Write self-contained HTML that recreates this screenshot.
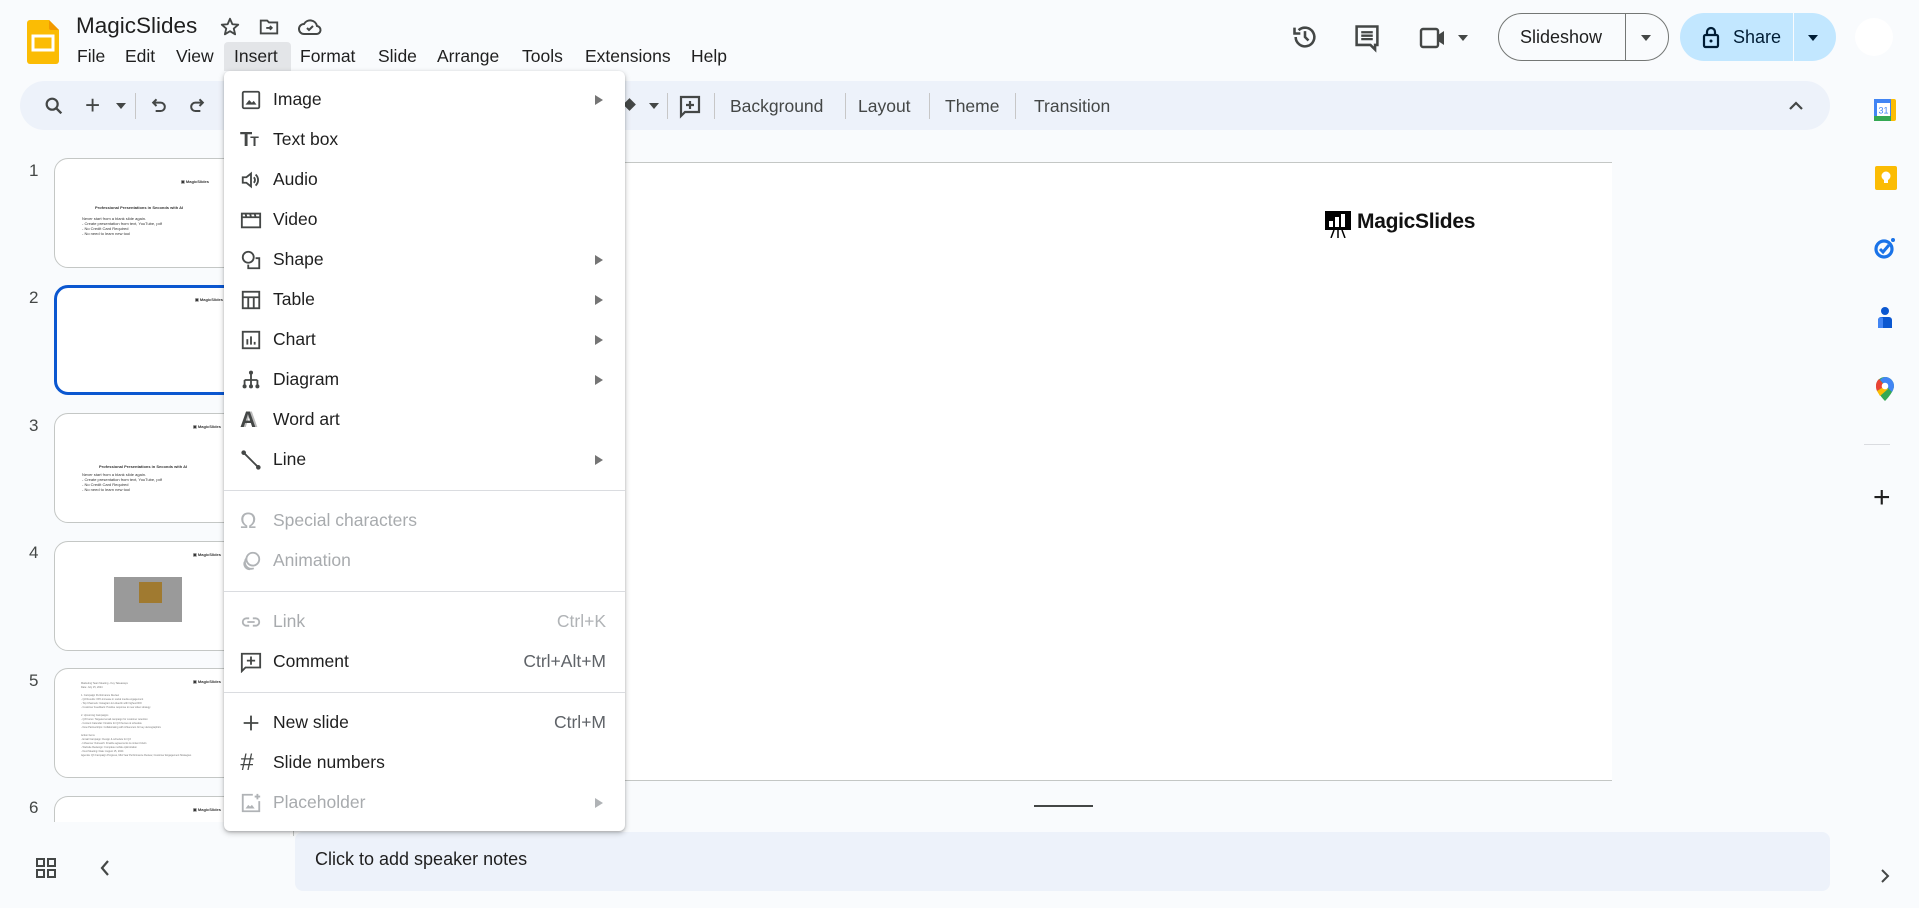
<!DOCTYPE html>
<html><head><meta charset="utf-8"><style>
*{box-sizing:border-box;margin:0;padding:0}
body{width:1919px;height:908px;background:#f9fbfd;font-family:"Liberation Sans",Arial,sans-serif;position:relative;overflow:hidden;color:#1f1f1f}
.a{position:absolute}
.menu span{position:absolute;font-size:17.5px;top:46px}
.tb{position:absolute;top:81px;left:20px;width:1810px;height:49px;background:#edf2fa;border-radius:25px}
.tbt{position:absolute;top:96px;font-size:17.5px;color:#444746}
.sep{position:absolute;top:93px;width:1px;height:26px;background:#c7c7c7}
.thumb{position:absolute;left:54px;width:240px;height:110px;background:#fff;border:1px solid #c4c7c5;border-radius:14px;overflow:hidden}
.num{position:absolute;left:29px;font-size:17px;color:#444746}
.dd{position:absolute;left:224px;top:71px;width:401px;height:760px;background:#fff;border-radius:6px;box-shadow:0 2px 6px rgba(0,0,0,.25),0 1px 2px rgba(0,0,0,.15)}
.it{position:absolute;left:49px;font-size:17.5px;color:#1f1f1f}
.it.g{color:#a8abae}
.ic{position:absolute;left:16px;width:22px;height:22px}
.arr{position:absolute;left:371px;width:0;height:0;border-left:8px solid #757575;border-top:5px solid transparent;border-bottom:5px solid transparent}
.sc{position:absolute;right:19px;font-size:17.5px;color:#5f6368}
.hr{position:absolute;left:0;width:401px;height:1px;background:#dadce0}
.tiny{font-size:4px;line-height:5px;color:#333;position:absolute}
</style></head><body>

<!-- logo -->
<svg class="a" style="left:27px;top:20px" width="32" height="44" viewBox="0 0 32 44"><path d="M3 0h19l10 10v31a3 3 0 0 1-3 3H3a3 3 0 0 1-3-3V3a3 3 0 0 1 3-3z" fill="#fbbc04"/><path d="M22 0l10 10h-8a2 2 0 0 1-2-2z" fill="#f29900"/><rect x="6" y="16" width="20" height="14" fill="none" stroke="#fff" stroke-width="3"/></svg>
<div class="a" style="left:76px;top:13px;font-size:22.5px">MagicSlides</div>
<svg class="a" style="left:219px;top:16px" width="22" height="22" viewBox="0 0 24 24"><path d="M12 3l2.6 6 6.4.5-4.9 4.2 1.5 6.3L12 16.6 6.4 20l1.5-6.3L3 9.5 9.4 9z" fill="none" stroke="#444746" stroke-width="2" stroke-linejoin="round"/></svg>
<svg class="a" style="left:258px;top:16px" width="22" height="22" viewBox="0 0 24 24"><path d="M3 5h7l2 2h9v12H3z" fill="none" stroke="#444746" stroke-width="2"/><path d="M9 13h6m-2-2l2 2-2 2" fill="none" stroke="#444746" stroke-width="2"/></svg>
<svg class="a" style="left:298px;top:16px" width="24" height="22" viewBox="0 0 24 22"><path d="M6 18a5 5 0 0 1 0-10 7 7 0 0 1 13 2 4 4 0 0 1-1 8z" fill="none" stroke="#444746" stroke-width="2"/><path d="M9 12l2 2 4-4" fill="none" stroke="#444746" stroke-width="2"/></svg>
<div class="a" style="left:224px;top:42px;width:67px;height:29px;background:#e3e5e8;border-radius:4px 4px 0 0"></div>
<div class="menu"><span style="left:77px">File</span><span style="left:125px">Edit</span><span style="left:176px">View</span><span style="left:234px">Insert</span><span style="left:300px">Format</span><span style="left:378px">Slide</span><span style="left:437px">Arrange</span><span style="left:522px">Tools</span><span style="left:585px">Extensions</span><span style="left:691px">Help</span></div>

<!-- top right -->
<svg class="a" style="left:1291px;top:23px" width="28" height="28" viewBox="0 0 24 24"><path d="M4 12a8 8 0 1 0 2.5-5.8" fill="none" stroke="#444746" stroke-width="2.2"/><path d="M3 4v5h5" fill="none" stroke="#444746" stroke-width="2.2"/><path d="M12 7v5l3 3" fill="none" stroke="#444746" stroke-width="2.2"/></svg>
<svg class="a" style="left:1353px;top:23px" width="28" height="30" viewBox="0 0 24 26"><path d="M3 3h18v16h-2v4l-4-4H3z" fill="none" stroke="#444746" stroke-width="2.2"/><path d="M7 8h10M7 11h10M7 14h10" stroke="#444746" stroke-width="2"/></svg>
<svg class="a" style="left:1419px;top:26px" width="28" height="24" viewBox="0 0 28 24"><rect x="2" y="3" width="17" height="18" rx="2" fill="none" stroke="#444746" stroke-width="2.4"/><path d="M19 9l6-4v14l-6-4z" fill="#444746"/></svg>
<div class="a" style="left:1458px;top:35px;border-top:6px solid #444746;border-left:5px solid transparent;border-right:5px solid transparent"></div>
<div class="a" style="left:1498px;top:13px;width:171px;height:48px;border:1px solid #747775;border-radius:24px"></div>
<div class="a" style="left:1625px;top:13px;width:1px;height:48px;background:#747775"></div>
<div class="a" style="left:1520px;top:27px;font-size:18px;color:#1f1f1f">Slideshow</div>
<div class="a" style="left:1641px;top:35px;border-top:6px solid #444746;border-left:5px solid transparent;border-right:5px solid transparent"></div>
<div class="a" style="left:1680px;top:13px;width:156px;height:48px;background:#c2e7ff;border-radius:24px"></div>
<div class="a" style="left:1793px;top:13px;width:1px;height:48px;background:#f9fbfd"></div>
<svg class="a" style="left:1702px;top:25px" width="18" height="24" viewBox="0 0 18 24"><rect x="2" y="10" width="14" height="12" rx="1.5" fill="none" stroke="#001d35" stroke-width="2.2"/><path d="M5 10V7a4 4 0 0 1 8 0v3" fill="none" stroke="#001d35" stroke-width="2.2"/><circle cx="9" cy="16" r="1.5" fill="#001d35"/></svg>
<div class="a" style="left:1733px;top:27px;font-size:18px;color:#001d35">Share</div>
<div class="a" style="left:1808px;top:35px;border-top:6px solid #001d35;border-left:5px solid transparent;border-right:5px solid transparent"></div>
<div class="a" style="left:1855px;top:18px;width:38px;height:38px;border-radius:50%;background:#fff"></div>

<!-- toolbar -->
<div class="tb"></div>
<svg class="a" style="left:43px;top:95px" width="22" height="22" viewBox="0 0 24 24"><circle cx="10" cy="10" r="6" fill="none" stroke="#444746" stroke-width="2.4"/><path d="M14.5 14.5L20 20" stroke="#444746" stroke-width="2.6"/></svg>
<div class="a" style="left:85px;top:90px;font-size:26px;color:#444746">+</div>
<div class="a" style="left:116px;top:103px;border-top:6px solid #444746;border-left:5px solid transparent;border-right:5px solid transparent"></div>
<div class="sep" style="left:135px"></div>
<svg class="a" style="left:149px;top:96px" width="20" height="20" viewBox="0 0 24 24"><path d="M9 4L5 8l4 4M5 8h9a5 5 0 0 1 0 10H8" fill="none" stroke="#444746" stroke-width="2.4"/></svg>
<svg class="a" style="left:187px;top:96px" width="20" height="20" viewBox="0 0 24 24"><path d="M15 4l4 4-4 4M19 8h-9a5 5 0 0 0 0 10h6" fill="none" stroke="#444746" stroke-width="2.4"/></svg>
<div class="a" style="left:625px;top:100px;width:9px;height:9px;background:#444746;transform:rotate(45deg)"></div>
<div class="a" style="left:649px;top:103px;border-top:6px solid #444746;border-left:5px solid transparent;border-right:5px solid transparent"></div>
<div class="sep" style="left:667px"></div>
<svg class="a" style="left:678px;top:94px" width="24" height="26" viewBox="0 0 24 26"><path d="M3 3h18v15H7l-4 4z" fill="none" stroke="#444746" stroke-width="2.2"/><path d="M12 7v8M8 11h8" stroke="#444746" stroke-width="2.2"/></svg>
<div class="sep" style="left:714px"></div>
<div class="tbt" style="left:730px">Background</div>
<div class="sep" style="left:845px"></div>
<div class="tbt" style="left:858px">Layout</div>
<div class="sep" style="left:929px"></div>
<div class="tbt" style="left:945px">Theme</div>
<div class="sep" style="left:1015px"></div>
<div class="tbt" style="left:1034px">Transition</div>
<svg class="a" style="left:1787px;top:99px" width="18" height="14" viewBox="0 0 18 14"><path d="M3 10l6-6 6 6" fill="none" stroke="#444746" stroke-width="2.2"/></svg>

<!-- canvas -->
<div class="a" style="left:295px;top:162px;width:1317px;height:619px;background:#fff;border-top:1px solid #c4c7c5;border-bottom:1px solid #c4c7c5"></div>
<svg class="a" style="left:1324px;top:210px" width="28" height="28" viewBox="0 0 28 28"><rect x="1" y="1" width="26" height="19" fill="#000"/><rect x="5" y="11" width="4" height="6" fill="#fff"/><rect x="11" y="7" width="4" height="10" fill="#fff"/><rect x="17" y="4" width="4" height="13" fill="#fff"/><path d="M10 20l-3 8M14 20v8M18 20l3 8" stroke="#000" stroke-width="1.5"/></svg>
<div class="a" style="left:1357px;top:210px;font-size:21px;font-weight:bold;color:#111;letter-spacing:-0.3px">MagicSlides</div>
<div class="a" style="left:1034px;top:805px;width:59px;height:2px;background:#444746"></div>

<!-- notes -->
<div class="a" style="left:295px;top:832px;width:1535px;height:59px;background:#edf2fa;border-radius:8px"></div>
<div class="a" style="left:315px;top:849px;font-size:18px;color:#1f1f1f">Click to add speaker notes</div>

<!-- thumbnails -->
<div class="num" style="top:161px">1</div>
<div class="thumb" style="top:158px">
<div class="tiny" style="left:126px;top:20px;font-weight:bold">▣ MagicSlides</div>
<div class="tiny" style="left:40px;top:46px;font-weight:bold">Professional Presentations in Seconds with AI</div>
<div class="tiny" style="left:27px;top:57px">Never start from a blank slide again.<br>- Create presentation from text, YouTube, pdf<br>- No Credit Card Required<br>- No need to learn new tool</div>
</div>
<div class="num" style="top:288px">2</div>
<div class="thumb" style="top:285px;border:3px solid #0b57d0">
<div class="tiny" style="left:138px;top:9px;font-weight:bold">▣ MagicSlides</div>
</div>
<div class="num" style="top:416px">3</div>
<div class="thumb" style="top:413px">
<div class="tiny" style="left:138px;top:10px;font-weight:bold">▣ MagicSlides</div>
<div class="tiny" style="left:44px;top:50px;font-weight:bold">Professional Presentations in Seconds with AI</div>
<div class="tiny" style="left:27px;top:58px">Never start from a blank slide again.<br>- Create presentation from text, YouTube, pdf<br>- No Credit Card Required<br>- No need to learn new tool</div>
</div>
<div class="num" style="top:543px">4</div>
<div class="thumb" style="top:541px">
<div class="tiny" style="left:138px;top:10px;font-weight:bold">▣ MagicSlides</div>
<div class="a" style="left:59px;top:35px;width:68px;height:45px;background:#9a9a9a"></div>
<div class="a" style="left:84px;top:40px;width:23px;height:21px;background:#a07a30"></div>
</div>
<div class="num" style="top:671px">5</div>
<div class="thumb" style="top:668px">
<div class="tiny" style="left:138px;top:10px;font-weight:bold">▣ MagicSlides</div>
<div class="tiny" style="left:26px;top:13px;color:#777;font-size:2.5px;line-height:4px">Marketing Team Meeting - Key Takeaways<br>Date: July 15, 2024<br><br>1. Campaign Performance Review<br>- Q2 Results: 15% increase in social media engagement<br>- Top Channels: Instagram &amp; LinkedIn with highest ROI<br>- Customer Feedback: Positive response to new video strategy<br><br>2. Upcoming Campaigns<br>- Q3 Focus: Targeted email campaign for customer retention<br>- Content Calendar: Finalize for Q3 themes &amp; schedule<br>- New Partnerships: Collaborating with influencers for key demographics<br><br>Action Items<br>- Email Campaign: Design &amp; schedule for Q3<br>- Influencer Outreach: Finalize agreements &amp; content briefs<br>- Website Redesign: Complete mobile optimization<br>- Next Meeting: Date: August 15, 2024<br>Agenda: Q3 Campaign Progress, Mid-Year Performance Review, Customer Engagement Strategies</div>
</div>
<div class="num" style="top:798px">6</div>
<div class="thumb" style="top:796px;height:40px;border-bottom:none;border-radius:14px 14px 0 0">
<div class="tiny" style="left:138px;top:10px;font-weight:bold">▣ MagicSlides</div>
</div>
<div class="a" style="left:0;top:822px;width:290px;height:86px;background:#f9fbfd"></div>
<svg class="a" style="left:36px;top:858px" width="20" height="20" viewBox="0 0 20 20"><g fill="none" stroke="#444746" stroke-width="2"><rect x="1" y="1" width="7" height="7"/><rect x="12" y="1" width="7" height="7"/><rect x="1" y="12" width="7" height="7"/><rect x="12" y="12" width="7" height="7"/></g></svg>
<svg class="a" style="left:98px;top:858px" width="14" height="20" viewBox="0 0 14 20"><path d="M10 3l-6 7 6 7" fill="none" stroke="#444746" stroke-width="2.2"/></svg>

<!-- right sidebar -->
<svg class="a" style="left:1874px;top:97px" width="22" height="24" viewBox="0 0 22 24"><rect x="0" y="2" width="22" height="22" rx="2" fill="#fbbc04"/><rect x="0" y="2" width="17" height="18" fill="#4285f4"/><rect x="3" y="6" width="13" height="13" fill="#fff"/><rect x="0" y="19" width="17" height="5" fill="#34a853"/><text x="4.5" y="16.5" font-size="9" fill="#4285f4" font-family="Liberation Sans">31</text></svg>
<svg class="a" style="left:1875px;top:166px" width="22" height="24" viewBox="0 0 22 24"><rect x="0" y="0" width="22" height="24" rx="2" fill="#fbbc04"/><circle cx="11" cy="10" r="4.5" fill="#fff"/><rect x="9" y="14" width="4" height="3" fill="#fff"/></svg>
<svg class="a" style="left:1874px;top:237px" width="22" height="22" viewBox="0 0 22 22"><circle cx="10" cy="12" r="8" fill="none" stroke="#1a73e8" stroke-width="3.2"/><path d="M6 12l3 3 6-7" fill="none" stroke="#1a73e8" stroke-width="3"/><circle cx="19" cy="3" r="2" fill="#1a73e8"/></svg>
<svg class="a" style="left:1876px;top:306px" width="18" height="24" viewBox="0 0 18 24"><circle cx="9" cy="5" r="4" fill="#0b57d0"/><path d="M2 14a3 3 0 0 1 3-3h8a3 3 0 0 1 3 3v8H2z" fill="#0b57d0"/><path d="M2 14v8h5v-10a3 3 0 0 0-5 2z" fill="#4285f4"/></svg>
<svg class="a" style="left:1876px;top:377px" width="18" height="25" viewBox="0 0 18 25"><path d="M9 0a9 9 0 0 1 9 9c0 6-9 15-9 15S0 15 0 9a9 9 0 0 1 9-9z" fill="#34a853"/><path d="M9 0a9 9 0 0 1 9 9c0 2-1 4-2 6L4 3a9 9 0 0 1 5-3z" fill="#4285f4"/><path d="M0 9a9 9 0 0 1 3-7l6 7-8 5C0 12 0 10 0 9z" fill="#ea4335"/><path d="M1 14l8-5 3 3-8 7z" fill="#fbbc04"/><circle cx="9" cy="9" r="3.3" fill="#fff"/></svg>
<div class="a" style="left:1864px;top:444px;width:26px;height:1px;background:#dadce0"></div>
<div class="a" style="left:1873px;top:481px;font-size:30px;color:#1f1f1f;font-weight:300">+</div>
<svg class="a" style="left:1879px;top:868px" width="12" height="16" viewBox="0 0 12 16"><path d="M3 2l6 6-6 6" fill="none" stroke="#444746" stroke-width="2"/></svg>

<!-- dropdown -->
<div class="dd">
<!-- rows: top offsets relative to dd (71) -->
<svg class="ic" style="top:18px" viewBox="0 0 24 24"><rect x="3" y="3" width="18" height="18" rx="1.5" fill="none" stroke="#444746" stroke-width="2"/><path d="M6 17l4-5 3 3 2-2 3 4z" fill="#444746"/></svg>
<div class="it" style="top:18px">Image</div><div class="arr" style="top:24px"></div>
<div class="ic" style="top:58px;font-weight:bold;font-size:20px;color:#444746;line-height:22px;letter-spacing:-2px">T<span style="font-size:14px">T</span></div>
<div class="it" style="top:58px">Text box</div>
<svg class="ic" style="top:98px" viewBox="0 0 24 24"><path d="M3 9h4l5-4v14l-5-4H3z" fill="none" stroke="#444746" stroke-width="2"/><path d="M15 9a4 4 0 0 1 0 6M17 6a8 8 0 0 1 0 12" fill="none" stroke="#444746" stroke-width="2"/></svg>
<div class="it" style="top:98px">Audio</div>
<svg class="ic" style="top:138px" viewBox="0 0 24 24"><rect x="2" y="5" width="20" height="15" fill="none" stroke="#444746" stroke-width="2"/><path d="M2 9h20M6 5l1 4M11 5l1 4M16 5l1 4" stroke="#444746" stroke-width="2"/></svg>
<div class="it" style="top:138px">Video</div>
<svg class="ic" style="top:178px" viewBox="0 0 24 24"><circle cx="9" cy="9" r="6" fill="none" stroke="#444746" stroke-width="2"/><path d="M17 10h4v11H9v-4" fill="none" stroke="#444746" stroke-width="2"/></svg>
<div class="it" style="top:178px">Shape</div><div class="arr" style="top:184px"></div>
<svg class="ic" style="top:218px" viewBox="0 0 24 24"><rect x="3" y="3" width="18" height="18" fill="none" stroke="#444746" stroke-width="2"/><path d="M3 9h18M9 9v12M15 9v12" stroke="#444746" stroke-width="2"/></svg>
<div class="it" style="top:218px">Table</div><div class="arr" style="top:224px"></div>
<svg class="ic" style="top:258px" viewBox="0 0 24 24"><rect x="3" y="3" width="18" height="18" fill="none" stroke="#444746" stroke-width="2"/><path d="M8 17v-6M12 17V8M16 17v-3" stroke="#444746" stroke-width="2"/></svg>
<div class="it" style="top:258px">Chart</div><div class="arr" style="top:264px"></div>
<svg class="ic" style="top:298px" viewBox="0 0 24 24"><circle cx="12" cy="4" r="2.2" fill="#444746"/><path d="M12 6v6M5 12h14M5 12v5M12 12v5M19 12v5" stroke="#444746" stroke-width="2"/><circle cx="5" cy="19" r="2.2" fill="#444746"/><circle cx="12" cy="19" r="2.2" fill="#444746"/><circle cx="19" cy="19" r="2.2" fill="#444746"/></svg>
<div class="it" style="top:298px">Diagram</div><div class="arr" style="top:304px"></div>
<div class="ic" style="top:337px;font-weight:bold;font-size:22px;color:#444746;line-height:24px;text-shadow:2px 0 #bbb">A</div>
<div class="it" style="top:338px">Word art</div>
<svg class="ic" style="top:378px" viewBox="0 0 24 24"><path d="M4 4l16 16" stroke="#444746" stroke-width="2"/><circle cx="4" cy="4" r="2.5" fill="#444746"/><circle cx="20" cy="20" r="2.5" fill="#444746"/></svg>
<div class="it" style="top:378px">Line</div><div class="arr" style="top:384px"></div>
<div class="hr" style="top:419px"></div>
<div class="ic" style="top:438px;font-size:22px;color:#b0b3b6;line-height:24px">Ω</div>
<div class="it g" style="top:439px">Special characters</div>
<svg class="ic" style="top:479px" viewBox="0 0 24 24"><circle cx="14" cy="10" r="7" fill="none" stroke="#b0b3b6" stroke-width="2"/><path d="M7 9a7 7 0 0 0 8 11M5 13a6 6 0 0 0 6 8" fill="none" stroke="#b0b3b6" stroke-width="2"/></svg>
<div class="it g" style="top:479px">Animation</div>
<div class="hr" style="top:520px"></div>
<svg class="ic" style="top:540px" viewBox="0 0 24 24"><path d="M10 8H7a4 4 0 0 0 0 8h3M14 8h3a4 4 0 0 1 0 8h-3M8 12h8" fill="none" stroke="#b0b3b6" stroke-width="2"/></svg>
<div class="it g" style="top:540px">Link</div><div class="sc" style="top:540px;color:#b0b3b6">Ctrl+K</div>
<svg class="ic" style="top:580px" viewBox="0 0 24 24"><path d="M2 3h20v15H6l-4 4z" fill="none" stroke="#444746" stroke-width="2"/><path d="M12 6v9M7.5 10.5h9" stroke="#444746" stroke-width="2"/></svg>
<div class="it" style="top:580px">Comment</div><div class="sc" style="top:580px">Ctrl+Alt+M</div>
<div class="hr" style="top:621px"></div>
<svg class="ic" style="top:641px" viewBox="0 0 24 24"><path d="M12 4v16M4 12h16" stroke="#444746" stroke-width="2"/></svg>
<div class="it" style="top:641px">New slide</div><div class="sc" style="top:641px">Ctrl+M</div>
<div class="ic" style="top:680px;font-size:24px;color:#444746;line-height:24px;font-style:italic">#</div>
<div class="it" style="top:681px">Slide numbers</div>
<svg class="ic" style="top:721px" viewBox="0 0 24 24"><path d="M14 3H3v18h18V10" fill="none" stroke="#b0b3b6" stroke-width="2"/><path d="M19 2v6M16 5h6" stroke="#b0b3b6" stroke-width="2"/><path d="M6 18l3-4 2 2 2-2 3 4z" fill="#b0b3b6"/></svg>
<div class="it g" style="top:721px">Placeholder</div><div class="arr" style="top:727px;border-left-color:#b0b3b6"></div>
</div>
</body></html>
